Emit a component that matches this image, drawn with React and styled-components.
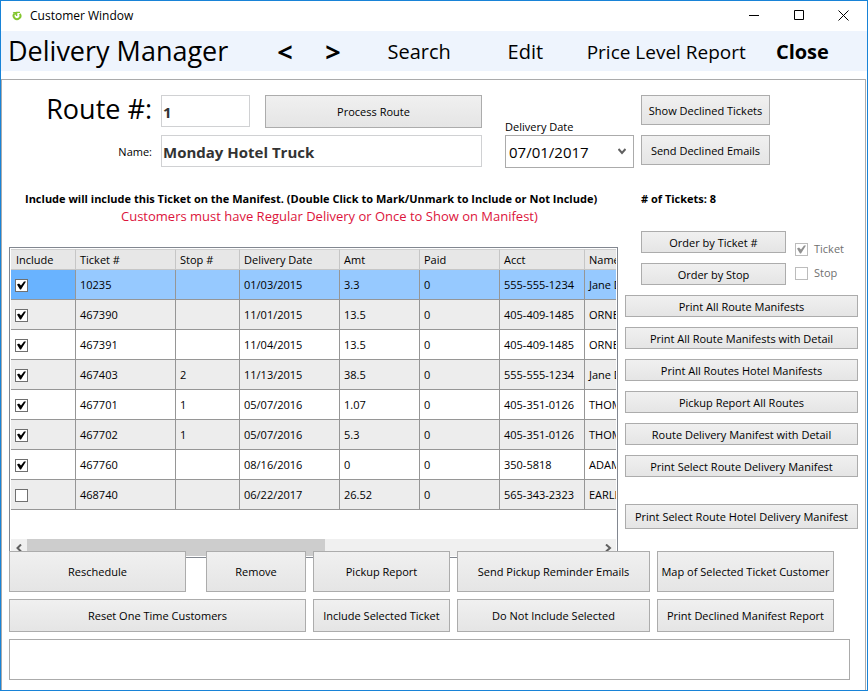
import { useState } from "react";
import styled, { createGlobalStyle } from "styled-components";

const GlobalStyle = createGlobalStyle`
  * {
    box-sizing: border-box;
  }

  body {
    margin: 0;
    background: #fff;
    color: #000;
    font-family: "Open Sans", "Noto Sans", sans-serif;
    font-size: 11px;
    line-height: 16px;
  }

  button,
  input,
  select,
  textarea {
    font: inherit;
    color: inherit;
  }
`;

const Window = styled.div`
  display: flex;
  flex-direction: column;
  min-height: 100vh;
  border: 1px solid #1883d7;
`;

const TitleBar = styled.header`
  display: flex;
  align-items: center;
  height: 30px;
  padding: 0 1px 0 11px;
  font-size: 12px;

  .title {
    flex: 1;
    margin-left: 8px;
  }
`;

const WindowButton = styled.button`
  display: flex;
  align-self: flex-start;
  align-items: center;
  justify-content: center;
  width: 45px;
  height: 28px;
  padding: 0;
  border: none;
  background: none;
`;

const Nav = styled.nav`
  display: grid;
  grid-template-columns: 269fr 48fr 62fr 120fr 79fr 189fr 91fr;
  align-items: center;
  height: 40px;
  padding-left: 7px;
  background: #eef4fd;

  h1 {
    margin: 0;
    font-size: 27px;
    font-weight: 400;
    line-height: 40px;
  }
`;

const NavLink = styled.a`
  padding-top: 2px;
  color: #000;
  font-size: ${(props) => props.$size || "20px"};
  font-weight: ${(props) => (props.$bold ? 700 : 400)};
  line-height: 38px;
  text-decoration: none;
  white-space: nowrap;
`;

const Panel = styled.main`
  flex: 1;
  margin: 8px 1px 0 0;
  padding: 15px 7px 10px;
  border: 1px solid #ababab;
  border-bottom: none;
`;

const Button = styled.button`
  height: ${(props) => props.$height || 22}px;
  padding: 1px 0 0;
  border: 1px solid #acacac;
  background: linear-gradient(#f0f0f0, #e5e5e5);
  white-space: nowrap;
`;

const RouteForm = styled.div`
  display: grid;
  grid-template-columns: 143px minmax(0, 1fr) 129px 129px;
  column-gap: 7px;
  padding-right: 88px;

  .labels {
    display: grid;
    grid-template-rows: 28px 33px;
    row-gap: 12px;
    align-items: center;
    justify-items: end;
  }

  .fields {
    display: flex;
    flex-direction: column;
    gap: 7px;
    margin: 0 16px 0 2px;
  }

  .route {
    display: grid;
    grid-template-columns: 89fr 217fr;
    gap: 15px;
    height: 33px;
  }

  .date {
    display: flex;
    flex-direction: column;
    justify-content: flex-end;
  }

  .declined {
    display: flex;
    flex-direction: column;
    gap: 10px;
  }
`;

const Label = styled.label`
  font-size: ${(props) => props.$size || "11px"};
`;

const TextField = styled.input`
  width: 100%;
  height: 32px;
  padding: 2px 1px 0;
  border: 1px solid #d0d1d3;
  color: #333;
  font-size: 15px;
  font-weight: 700;
`;

const SelectBox = styled.div`
  display: grid;
  align-items: center;

  select,
  svg {
    grid-area: 1 / 1;
  }

  select {
    height: 33px;
    padding: 0 3px;
    border: 1px solid #ababab;
    border-radius: 0;
    background: #fff;
    font-size: 15px;
    appearance: none;
  }

  svg {
    justify-self: end;
    margin-right: 8px;
    pointer-events: none;
  }
`;

const Body = styled.div`
  display: grid;
  grid-template-columns: minmax(0, 1fr) 233px;
  column-gap: 7px;
  margin-top: 23px;
`;

const Notice = styled.div`
  height: 56px;
  padding-left: 16px;
  white-space: nowrap;

  p {
    margin: 0;
    font-weight: 700;
  }

  .warning {
    padding-left: 96px;
    color: #dc143c;
    font-size: 13px;
    font-weight: 400;
    line-height: 18px;
  }
`;

const GridFrame = styled.div`
  height: 311px;
  padding: 1px;
  border: 1px solid #828790;
  display: flex;
  flex-direction: column;

  .viewport {
    flex: 1;
    overflow: hidden;
  }
`;

const Table = styled.table`
  width: 1150px;
  border-collapse: separate;
  border-spacing: 0;
  table-layout: fixed;

  th,
  td {
    padding: 0 4px;
    border: 0 solid #969696;
    border-width: 0 1px 1px 0;
    text-align: left;
    font-weight: 400;
    white-space: nowrap;
    overflow: hidden;
  }

  th {
    height: 21px;
    border-color: #c6c6c6;
    border-top: 1px solid #d0d0d0;
    background: #e7e7e7;
  }

  th:first-child {
    padding-left: 5px;
  }
`;

const Row = styled.tr`
  height: 30px;
  background: ${(props) => (props.$selected ? "#96c9ff" : props.$alt ? "#ededed" : "#fff")};

  td:first-child {
    padding-top: 1px;
    background: ${(props) => (props.$selected ? "#69b3ff" : "transparent")};
  }
`;

const CheckBox = styled.input.attrs({ type: "checkbox" })`
  display: block;
  width: 13px;
  height: 13px;
  margin: 0;
  border: 1px solid #707070;
  background: #fff;
  color: #000;
  appearance: none;

  &:checked::before {
    content: "";
    display: block;
    width: 11px;
    height: 11px;
    background: currentColor;
    clip-path: polygon(1px 5px, 3px 4px, 5px 6px, 8px 2px, 10px 2px, 5px 10px, 4px 10px);
  }

  &:disabled {
    border-color: #bcbcbc;
    color: #909090;
  }
`;

const ScrollBar = styled.div`
  display: flex;
  height: 17px;
  background: #f0f0f0;

  button {
    display: flex;
    align-items: center;
    justify-content: center;
    width: 16px;
    padding: 0;
    border: none;
    background: none;
  }

  .track {
    flex: 1;
  }

  .thumb {
    width: 52%;
    height: 100%;
    background: #cdcdcd;
  }
`;

const Side = styled.aside`
  display: flex;
  flex-direction: column;
  gap: 10px;

  .count {
    height: 30px;
    margin: 0 0 0 16px;
    font-weight: 700;
  }

  .order {
    display: grid;
    grid-template-columns: 145px 1fr;
    column-gap: 9px;
    margin-left: 16px;
  }

  .buttons {
    display: grid;
    row-gap: 10px;
  }

  .checks {
    display: flex;
    flex-direction: column;
    gap: 8px;
    padding-top: 10px;
  }

  .last {
    margin-top: 17px;
  }
`;

const CheckLabel = styled.label`
  display: flex;
  align-items: center;
  gap: 6px;
  color: #707070;
`;

const Actions = styled.div`
  position: relative;
  display: grid;
  grid-template-columns: 297fr 137fr 193fr 177fr;
  gap: 7px;
  margin-top: -7px;
  padding-right: 24px;

  .pair {
    display: grid;
    grid-template-columns: 177fr 100fr;
    gap: 20px;
  }
`;

const Notes = styled.textarea`
  display: block;
  width: calc(100% - 8px);
  height: 41px;
  margin-top: 7px;
  border: 1px solid #ababab;
  resize: none;
`;

const columns = [
  { name: "Include", width: 65 },
  { name: "Ticket #", width: 100 },
  { name: "Stop #", width: 64 },
  { name: "Delivery Date", width: 100 },
  { name: "Amt", width: 80 },
  { name: "Paid", width: 80 },
  { name: "Acct", width: 85 },
  { name: "Name", width: 576 },
];

const tickets = [
  { id: "10235", stop: "", date: "01/03/2015", amt: "3.3", paid: "0", acct: "555-555-1234", name: "Jane D", include: true },
  { id: "467390", stop: "", date: "11/01/2015", amt: "13.5", paid: "0", acct: "405-409-1485", name: "ORNE", include: true },
  { id: "467391", stop: "", date: "11/04/2015", amt: "13.5", paid: "0", acct: "405-409-1485", name: "ORNE", include: true },
  { id: "467403", stop: "2", date: "11/13/2015", amt: "38.5", paid: "0", acct: "555-555-1234", name: "Jane D", include: true },
  { id: "467701", stop: "1", date: "05/07/2016", amt: "1.07", paid: "0", acct: "405-351-0126", name: "THOM", include: true },
  { id: "467702", stop: "1", date: "05/07/2016", amt: "5.3", paid: "0", acct: "405-351-0126", name: "THOM", include: true },
  { id: "467760", stop: "", date: "08/16/2016", amt: "0", paid: "0", acct: "350-5818", name: "ADAM", include: true },
  { id: "468740", stop: "", date: "06/22/2017", amt: "26.52", paid: "0", acct: "565-343-2323", name: "EARLE", include: false },
];

const reports = [
  "Print All Route Manifests",
  "Print All Route Manifests with Detail",
  "Print All Routes Hotel Manifests",
  "Pickup Report All Routes",
  "Route Delivery Manifest with Detail",
  "Print Select Route Delivery Manifest",
];

const Chevron = ({ d, width, height }) => (
  <svg width={width} height={height} viewBox={`0 0 ${width} ${height}`} fill="none" stroke="#606060" strokeWidth="2">
    <path d={d} />
  </svg>
);

const TicketGrid = () => {
  const [rows, setRows] = useState(tickets);
  const [selected, setSelected] = useState("10235");

  function toggle(id) {
    setRows(rows.map((row) => (row.id === id ? { ...row, include: !row.include } : row)));
  }

  return (
    <GridFrame>
      <div className="viewport">
        <Table>
          <colgroup>
            {columns.map((col) => (
              <col key={col.name} width={col.width} />
            ))}
          </colgroup>
          <thead>
            <tr>
              {columns.map((col) => (
                <th key={col.name}>{col.name}</th>
              ))}
            </tr>
          </thead>
          <tbody>
            {rows.map((row, key) => (
              <Row
                key={row.id}
                $selected={row.id === selected}
                $alt={key % 2 === 1}
                onClick={() => setSelected(row.id)}
              >
                <td>
                  <CheckBox
                    aria-label={`Include ${row.id}`}
                    checked={row.include}
                    onChange={() => toggle(row.id)}
                  />
                </td>
                <td>{row.id}</td>
                <td>{row.stop}</td>
                <td>{row.date}</td>
                <td>{row.amt}</td>
                <td>{row.paid}</td>
                <td>{row.acct}</td>
                <td>{row.name}</td>
              </Row>
            ))}
          </tbody>
        </Table>
      </div>
      <ScrollBar>
        <button aria-label="Scroll left">
          <Chevron width={7} height={8} d="M5 0.5 L1.5 4 L5 7.5" />
        </button>
        <div className="track">
          <div className="thumb" />
        </div>
        <button aria-label="Scroll right">
          <Chevron width={7} height={8} d="M1 0.5 L5 4 L1 7.5" />
        </button>
      </ScrollBar>
    </GridFrame>
  );
};

const App = () => {
  return (
    <>
      <GlobalStyle />
      <Window>
        <TitleBar>
          <svg width="10" height="10" viewBox="0 0 10 10" fill="none" stroke="#84c62f" strokeWidth="2">
            <path d="M2.4 2.6 A3.4 3.4 0 1 0 7.8 2.8" />
            <path d="M4.6 5 V1.4 H8" strokeWidth="1.4" />
            <path d="M0.6 1 H4 V4.2 Z" fill="#84c62f" stroke="none" />
          </svg>
          <span className="title">Customer Window</span>
          <WindowButton aria-label="Minimize">
            <svg width="10" height="10" stroke="#000" fill="none">
              <path d="M0 5.5 H10" />
            </svg>
          </WindowButton>
          <WindowButton aria-label="Maximize">
            <svg width="10" height="10" stroke="#000" fill="none">
              <path d="M0.5 0.5 H9.5 V9.5 H0.5 Z" />
            </svg>
          </WindowButton>
          <WindowButton aria-label="Close window">
            <svg width="11" height="11" stroke="#000" fill="none">
              <path d="M0.5 0.5 L10.5 10.5 M10.5 0.5 L0.5 10.5" />
            </svg>
          </WindowButton>
        </TitleBar>
        <Nav>
          <h1>Delivery Manager</h1>
          <NavLink href="#prev" $bold $size="27px">&lt;</NavLink>
          <NavLink href="#next" $bold $size="27px">&gt;</NavLink>
          <NavLink href="#search">Search</NavLink>
          <NavLink href="#edit">Edit</NavLink>
          <NavLink href="#prices" $size="19px">Price Level Report</NavLink>
          <NavLink href="#close" $bold>Close</NavLink>
        </Nav>
        <Panel>
          <RouteForm>
            <div className="labels">
              <Label htmlFor="route" $size="27px">Route #:</Label>
              <Label htmlFor="name">Name:</Label>
            </div>
            <div className="fields">
              <div className="route">
                <TextField id="route" defaultValue="1" />
                <Button $height={33}>Process Route</Button>
              </div>
              <TextField id="name" defaultValue="Monday Hotel Truck" />
            </div>
            <div className="date">
              <Label htmlFor="date">Delivery Date</Label>
              <SelectBox>
                <select id="date">
                  <option>07/01/2017</option>
                </select>
                <Chevron width={8} height={7} d="M0.5 1 L4 5 L7.5 1" />
              </SelectBox>
            </div>
            <div className="declined">
              <Button $height={30}>Show Declined Tickets</Button>
              <Button $height={30}>Send Declined Emails</Button>
            </div>
          </RouteForm>
          <Body>
            <div>
              <Notice>
                <p>Include will include this Ticket on the Manifest. (Double Click to Mark/Unmark to Include or Not Include)</p>
                <p className="warning">Customers must have Regular Delivery or Once to Show on Manifest)</p>
              </Notice>
              <TicketGrid />
            </div>
            <Side>
              <p className="count"># of Tickets: 8</p>
              <div className="order">
                <div className="buttons">
                  <Button>Order by Ticket #</Button>
                  <Button>Order by Stop</Button>
                </div>
                <div className="checks">
                  <CheckLabel>
                    <CheckBox defaultChecked disabled />
                    Ticket
                  </CheckLabel>
                  <CheckLabel>
                    <CheckBox disabled />
                    Stop
                  </CheckLabel>
                </div>
              </div>
              {reports.map((report) => (
                <Button key={report}>{report}</Button>
              ))}
              <Button className="last" $height={25}>Print Select Route Hotel Delivery Manifest</Button>
            </Side>
          </Body>
          <Actions>
            <div className="pair">
              <Button $height={41}>Reschedule</Button>
              <Button $height={41}>Remove</Button>
            </div>
            <Button $height={41}>Pickup Report</Button>
            <Button $height={41}>Send Pickup Reminder Emails</Button>
            <Button $height={41}>Map of Selected Ticket Customer</Button>
            <Button $height={33}>Reset One Time Customers</Button>
            <Button $height={33}>Include Selected Ticket</Button>
            <Button $height={33}>Do Not Include Selected</Button>
            <Button $height={33}>Print Declined Manifest Report</Button>
          </Actions>
          <Notes aria-label="Notes" />
        </Panel>
      </Window>
    </>
  );
};

export default App;
